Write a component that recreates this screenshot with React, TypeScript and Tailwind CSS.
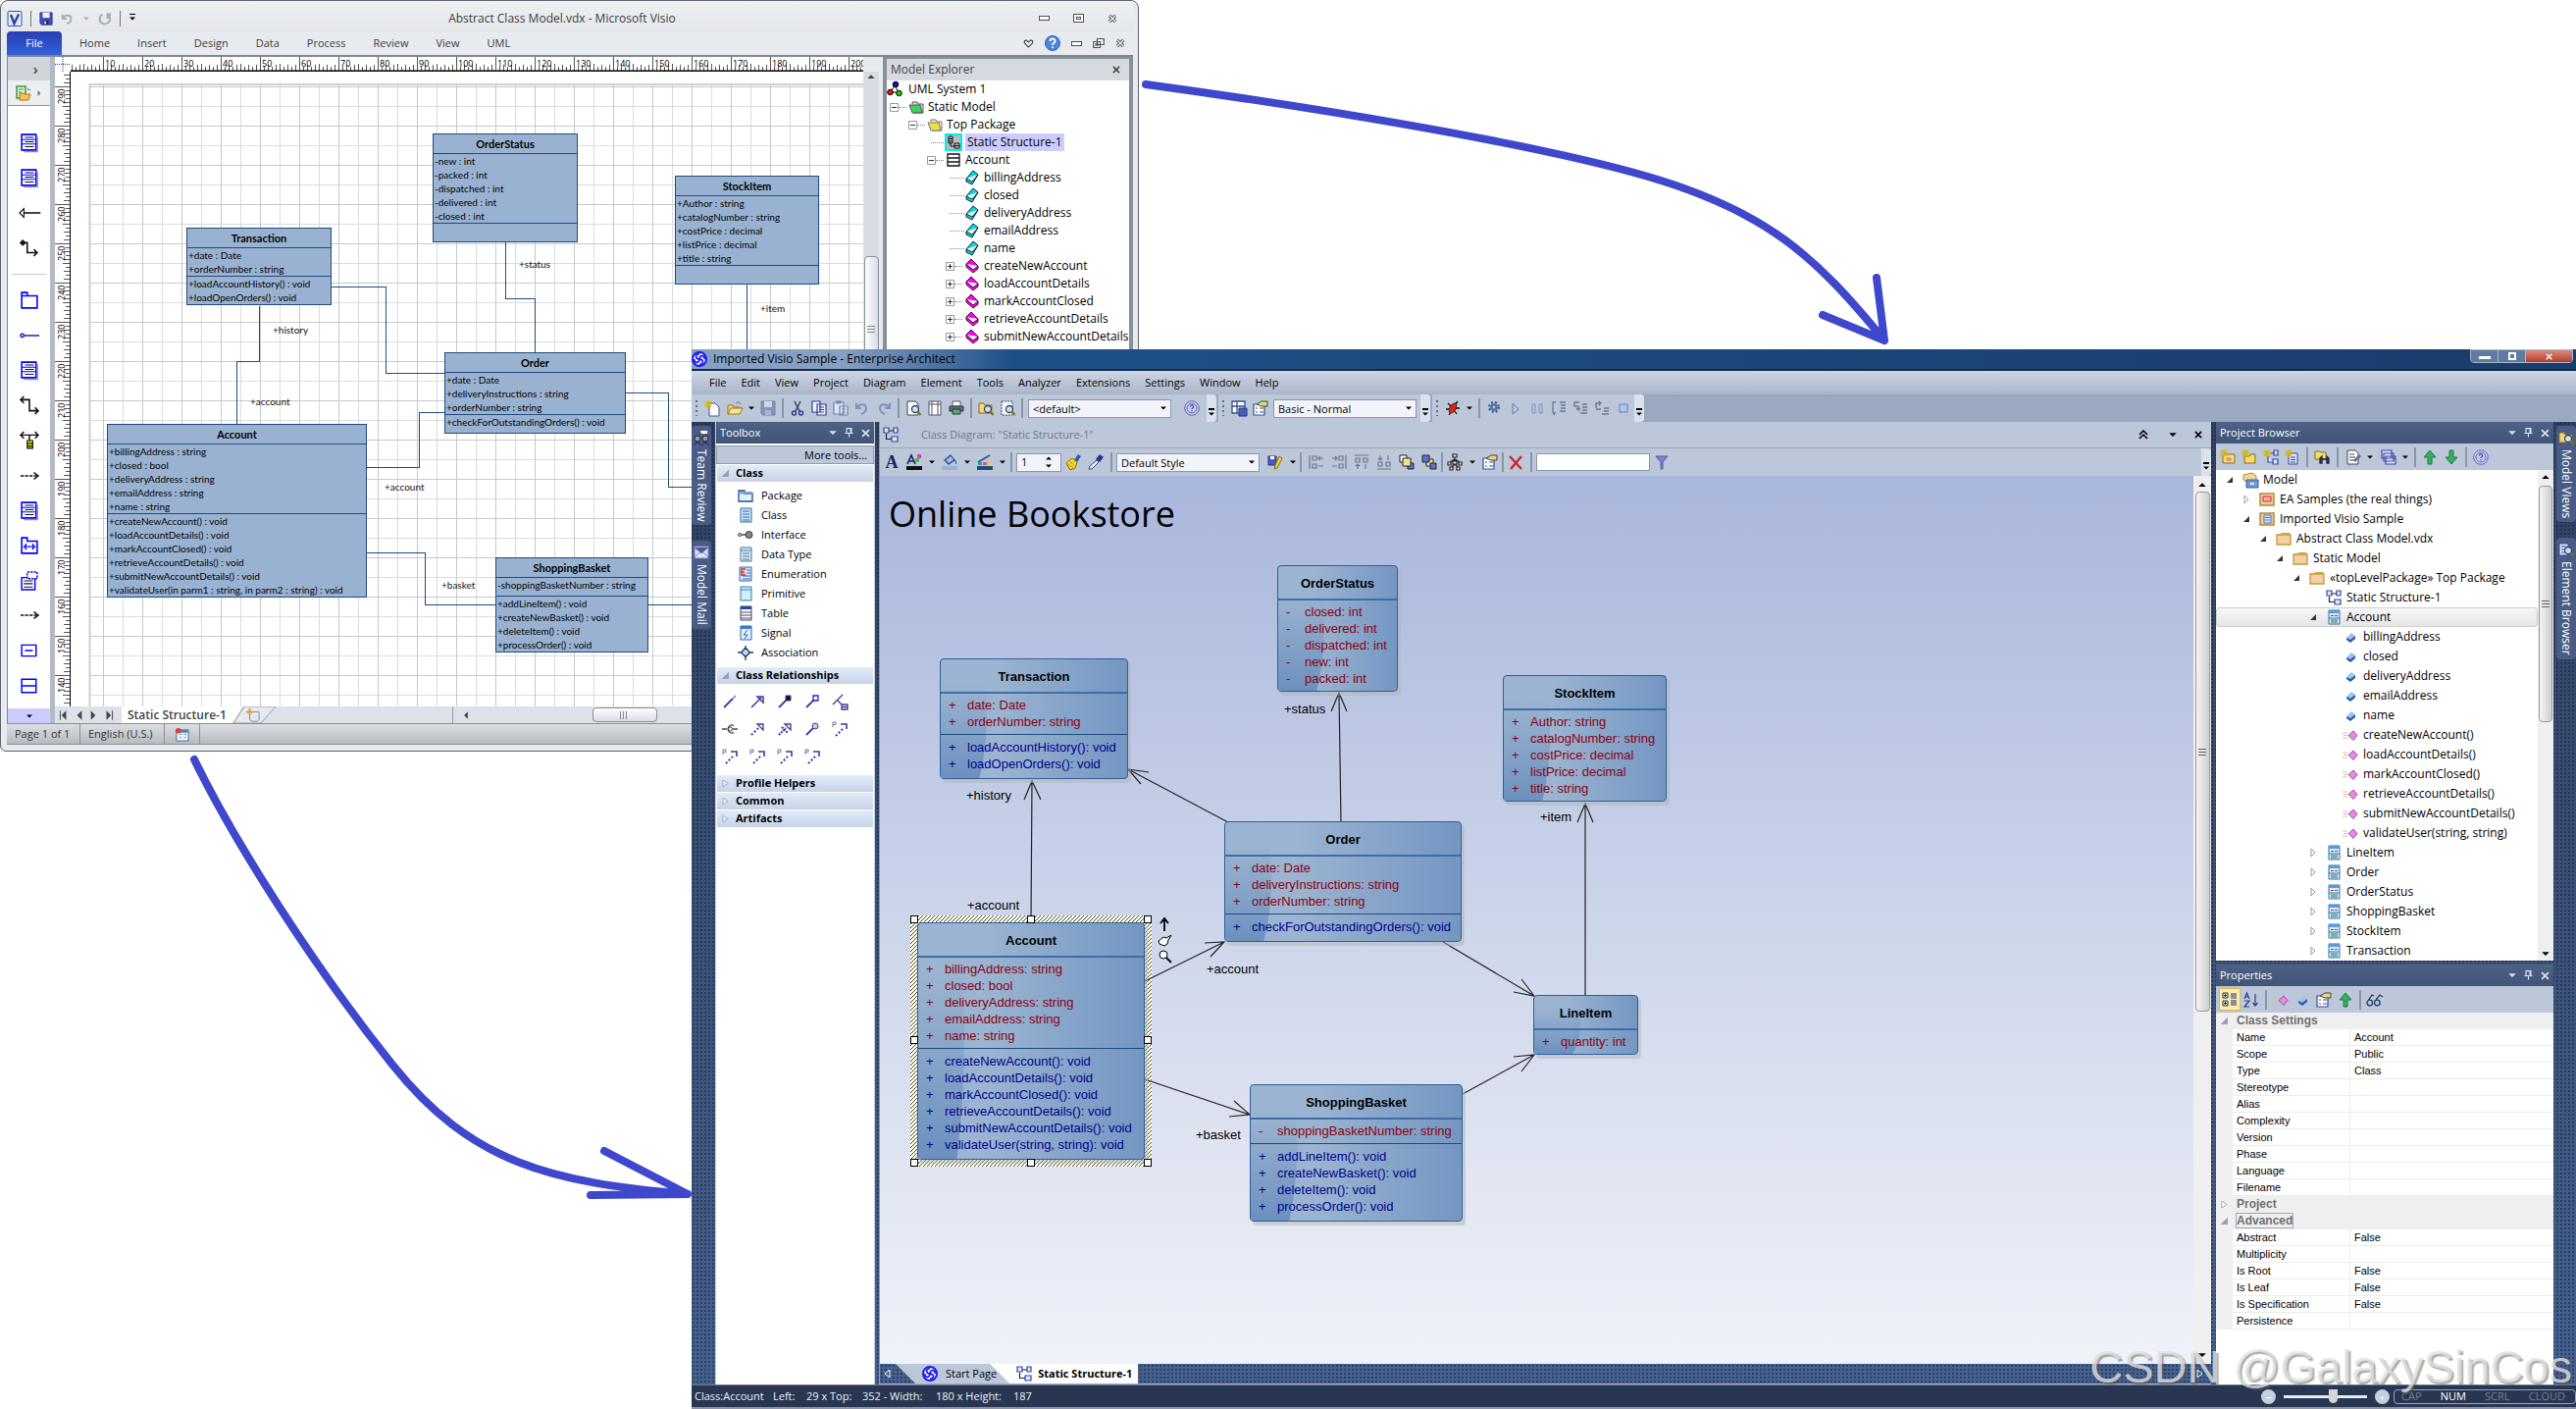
import type { ReactNode } from "react"

/* ---------- icons ---------- */

const star = <path d="M4 0v8M0 4h8M1 1l6 6M7 1 1 7" stroke="#d8b400" strokeWidth="1.2" />
const lens = (
  <>
    <circle cx="10" cy="9" r="3.5" fill="#cfe0f5" stroke="#33415c" strokeWidth="1.3" />
    <path d="m12.5 11.5 3 3.5" stroke="#8a6d1a" strokeWidth="2.2" />
  </>
)

const icons: Record<string, ReactNode> = {
  visio: (
    <>
      <rect x="1" y="0.5" width="14" height="15" rx="1" fill="#e6ecf8" stroke="#2f55a8" />
      <path d="M4 4l3.5 9L12 3.500" stroke="#2146a0" strokeWidth="2.4" />
    </>
  ),
  save: (
    <>
      <path d="M1 1h14v14H2.500L1 13.500z" fill="#3f4fc0" stroke="#2a3490" />
      <path d="M4 1h8v6H4z" fill="#f3f6ff" />
      <path d="M5 10h6v5H5z" fill="#20286a" />
      <path d="M6 11h2v3H6z" fill="#fff" />
    </>
  ),
  saveDim: (
    <>
      <path d="M1 1h14v14H2.500L1 13.500z" fill="#8593b8" stroke="#7482a8" />
      <path d="M4 1h8v6H4z" fill="#cdd5e6" />
      <path d="M5 10h6v5H5z" fill="#aab6d0" />
    </>
  ),
  undo: <path d="M2 3v5h5M2.500 7.500C5 3 12 3 12 8c0 3-2 5-5 6" stroke="currentColor" strokeWidth="2" />,
  redo: <path d="M14 3v5H9M13.500 7.500C11 3 4 3 4 8c0 3 2 5 5 6" stroke="currentColor" strokeWidth="2" />,
  repeat: <path d="M5 3a6 6 0 1 0 7 1M11 8V3h4" stroke="currentColor" strokeWidth="2.4" />,
  heart: <path d="M8 13 2 7V4l3-1 3 3 3-3 3 1v3z" stroke="currentColor" strokeWidth="1.800" fill="#fff" />,
  restore: <path d="M6 2h9v8H6zM1 6h9v8H1zM4 9h3v2H4z" stroke="currentColor" strokeWidth="1.500" fill="#f4f5f7" />,
  crossOutline: (
    <>
      <path d="M3 3l10 10M13 3 3 13" stroke="currentColor" strokeWidth="5" />
      <path d="M3 3l10 10M13 3 3 13" stroke="#fff" strokeWidth="2" />
    </>
  ),
  help: (
    <>
      <circle cx="8" cy="8" r="7.500" fill="#4b86d8" stroke="#2f62ad" />
      <path d="M5.500 6c0-3.500 5-3.500 5 0 0 2-2.500 1.800-2.500 4M8 11.500v1.500" stroke="#fff" strokeWidth="1.800" />
    </>
  ),
  helpRing: (
    <>
      <circle cx="8" cy="8" r="7.300" fill="#c9cff0" stroke="#6268b8" />
      <circle cx="8" cy="8" r="5" stroke="#6268b8" />
      <path d="M6.300 6.500c0-2.200 3.400-2.200 3.400 0 0 1.300-1.700 1.200-1.700 2.500M8 10.300v1.200" stroke="#4046a0" strokeWidth="1.200" />
    </>
  ),
  stencils: (
    <>
      <path d="M1 1h9v12H1z" fill="#dff0d8" stroke="#3c9a3c" strokeWidth="1.500" />
      <path d="M3 4h5M3 7h3" stroke="#3c9a3c" />
      <path d="M4 8h4l1 1h6l-2 6H4z" fill="#f7c64a" stroke="#a87412" />
      <path d="M12 3l2 2 1-1" stroke="#3564b0" />
    </>
  ),
  classBox: (
    <>
      <path d="M1 1h13v14H1z" fill="#fff" stroke="#00f" strokeWidth="1.400" />
      <path d="M4 3.500h8M4 7.500h8M4 12h8" stroke="#111" />
      <path d="M1 5.500h13M1 9.500h13" stroke="#00f" />
      <path d="M15.500 3v13.500H3" stroke="#999" />
    </>
  ),
  genArrow: (
    <>
      <path d="M18 8H3" stroke="#111" strokeWidth="1.400" />
      <path d="M3 4v8l-4-4z" stroke="#111" fill="#fff" />
    </>
  ),
  elbow: (
    <>
      <path d="M2 3h4v9h9M12 9l3 3-3 3" stroke="#111" strokeWidth="1.400" />
      <path d="M-1 3l3-3 3 3-3 3z" fill="#111" />
    </>
  ),
  elbow2: <path d="M0 3h8v10h8M13 10l3 3-3 3M3 0 0 3l3 3" stroke="#111" strokeWidth="1.400" />,
  folderOutline: <path d="M1 4V1h5v3h9v11H1zM1 4h5" stroke="#00f" strokeWidth="1.400" fill="#fff" />,
  lollipop: <path d="M3 8h14M3 8a1.500 1.500 0 1 0-3 0 1.500 1.500 0 0 0 3 0" stroke="#2020c0" strokeWidth="1.400" />,
  noteArrow: (
    <>
      <path d="M0 3h16M3 0 0 3l3 3M13 0l3 3-3 3M8 3v5" stroke="#111" strokeWidth="1.300" />
      <path d="M6 8h5v7H6z" fill="#ee0" stroke="#111" />
      <path d="M6 10.500h5M6 13h5" stroke="#111" />
    </>
  ),
  dashArrow: (
    <>
      <path d="M0 8h15" stroke="#111" strokeWidth="1.400" strokeDasharray="3 1" />
      <path d="M12 5l4 3-4 3" stroke="#111" strokeWidth="1.300" />
    </>
  ),
  subsystem: (
    <>
      <path d="M1 4V1h5v3h9v11H1z" fill="#fff" stroke="#00f" strokeWidth="1.400" />
      <path d="M3 9l2-2v4zM13 9l-2-2v4zM6 9h4" stroke="#00f" />
    </>
  ),
  dottedClass: (
    <>
      <path d="M1 5h12v11H1z" fill="#fff" stroke="#00f" strokeWidth="1.300" />
      <path d="M3 8h8M3 10.500h8M3 13.500h8" stroke="#111" />
      <path d="M6 0h9v6H6z" fill="#fff" stroke="#00f" strokeWidth="1.300" strokeDasharray="2 1" />
    </>
  ),
  object: <path d="M1 3h13v10H1zM4 8h7" stroke="#00f" strokeWidth="1.300" fill="#fff" />,
  node2: <path d="M1 2h13v12H1zM1 8h13" stroke="#00f" strokeWidth="1.300" fill="#fff" />,
  uml: (
    <>
      <path d="M8 4 4 11h8z" stroke="#111" />
      <circle cx="9" cy="3" r="2.800" fill="#11c" stroke="#000" />
      <circle cx="3.500" cy="11" r="2.800" fill="#e11" stroke="#000" />
      <circle cx="12.500" cy="12" r="2.800" fill="#1c1" stroke="#000" />
    </>
  ),
  folderGreen: (
    <>
      <path d="M4 5V3h5l1 2h5v9H5" fill="#cfe8cf" stroke="#555" />
      <path d="M1 6h11l2 8H4z" fill="#3fd060" stroke="#555" />
    </>
  ),
  folderYellow: (
    <>
      <path d="M4 5V3h5l1 2h5v9H5" fill="#f6f2c0" stroke="#777" />
      <path d="M1 6h11l2 8H4z" fill="#ece04a" stroke="#777" />
    </>
  ),
  structure: (
    <>
      <rect width="16" height="16" fill="#bbb" stroke="#0ee" strokeWidth="2" />
      <path d="M3 2h4v7H3zM3 4.500h4M3 7h4M9 9h5v5H9zM9 11.500h5M5 9v3h4" stroke="#111" />
    </>
  ),
  classBlack: <path d="M2 2h12v12H2zM2 6h12M2 10h12" stroke="#111" fill="#fff" strokeWidth="1.300" />,
  gemCyan: <path d="M2 9l7-8 5 4-6 10-6-3zM2 9l6 3 6-7" fill="#0dd" stroke="#123" />,
  gemMagenta: <path d="M2 6l5-5 7 7v3l-5 4-7-6zM2 6l7 6 5-4" fill="#f0e" stroke="#313" />,
  logo: (
    <>
      <circle cx="8" cy="8" r="7" fill="#fff" stroke="#1a1aee" strokeWidth="2" />
      <path d="M8 8C3 8 4 2 8 3M8 8c5 0 4 6 0 5M8 8c0 5-6 4-5 0M8 8c0-5 6-4 5 0" stroke="#1a1aee" strokeWidth="1.800" />
    </>
  ),
  newDoc: (
    <>
      <path d="M5 3h6l4 4v9H5z" fill="#f8fbff" stroke="#3e5c94" />
      {star}
    </>
  ),
  open: (
    <>
      <path d="M1 14V5h5l1 2h6v3" fill="#f5d77a" stroke="#9a7414" />
      <path d="M1 14l3-6h12l-3 6z" fill="#fbe49a" stroke="#9a7414" />
      <path d="M9 3c2-2 4-1 5 1" stroke="#666" />
    </>
  ),
  cut: (
    <>
      <path d="M5 1l5 10M11 1 6 11" stroke="#3a4664" strokeWidth="1.500" />
      <circle cx="4.500" cy="13" r="2" stroke="#33408f" strokeWidth="1.500" />
      <circle cx="11.500" cy="13" r="2" stroke="#33408f" strokeWidth="1.500" />
    </>
  ),
  copy: <path d="M1 1h8v11H1zM6 4h9v11H6zM8 7h5M8 9.500h5M8 12h5" fill="#f3f5fd" stroke="#33408f" strokeWidth="1.200" />,
  paste: <path d="M1 2h10v12H1zM4 1h4v2H4zM7 6h8v9H7zM9 9h4M9 12h4" fill="#dde4f2" stroke="#7384b0" strokeWidth="1.200" />,
  preview: (
    <>
      <path d="M2 1h8l3 3v11H2z" fill="#fff" stroke="#445" />
      {lens}
    </>
  ),
  page: <path d="M2 1h12v14H2zM5 1v14M11 1v14M2 4h12" fill="#fff" stroke="#556" />,
  print: (
    <>
      <path d="M4 1h8v5H4z" fill="#fff" stroke="#556" />
      <path d="M1 6h14v5H1z" fill="#5d6a84" stroke="#334" />
      <path d="M4 9h8v5H4z" fill="#4fb06a" stroke="#334" />
    </>
  ),
  findFolder: (
    <>
      <path d="M1 3h5l1 2h7v8H1z" fill="#f5d77a" stroke="#8a6d1a" />
      {lens}
    </>
  ),
  findDoc: (
    <>
      <path d="M2 1h11v14H2z" fill="#f5f7ff" stroke="#445" strokeDasharray="2 1" />
      {lens}
    </>
  ),
  layoutSave: (
    <>
      <path d="M1 1h13v12H1zM1 6h13M6 1v12" fill="#fff" stroke="#33508f" strokeWidth="1.300" />
      <path d="M8 8h8v8H8z" fill="#4a5cc0" stroke="#26307a" />
    </>
  ),
  props: (
    <>
      <path d="M1 4h11v11H1zM3 8h2M3 12h2M7 8h4M7 12h4" fill="#fff" stroke="#33508f" strokeWidth="1.200" />
      <path d="M4 4l5-3h6v5H9z" fill="#e6d87a" stroke="#444" />
    </>
  ),
  bug: (
    <>
      <path d="M3 3l3 3M13 1l-3 4M1 9h4M11 8h4M4 15l2-3M12 14l-2-3" stroke="#111" strokeWidth="1.300" />
      <ellipse cx="8" cy="8" rx="3" ry="5.500" transform="rotate(30 8 8)" fill="#d22" stroke="#611" />
    </>
  ),
  gear: (
    <>
      <circle cx="8" cy="7" r="5" stroke="#41588e" strokeWidth="2" strokeDasharray="2 2" />
      <circle cx="8" cy="7" r="4" fill="#5874ac" />
      <circle cx="8" cy="7" r="1.200" fill="#c7d3ea" />
    </>
  ),
  play: <path d="M5 3l6 6-6 5z" fill="#b6c5e6" stroke="#6679b0" />,
  pause: <path d="M3 4h3v9H3zM10 4h3v9h-3z" fill="#b6c5e6" stroke="#7f8fbe" />,
  step1: <path d="M5 2H2v11l2 2M9 2h6M10 5h5M10 8h5M9 11h6M5 12l-2 2" stroke="#6a7890" strokeWidth="1.300" />,
  step2: <path d="M7 2H2v4h4v4M4 8l2 2 2-2M10 4h5M10 7h5M10 10h5M8 13h7" stroke="#6a7890" strokeWidth="1.300" />,
  step3: <path d="M2 8V3h5M5 1l2 2-2 2M2 9h5M10 8h5M10 11h5M8 14h7" stroke="#6a7890" strokeWidth="1.300" />,
  stop: <path d="M4 4h8v8H4z" fill="#b6c5f0" stroke="#6679c0" />,
  diagram: (
    <>
      <path d="M6 4h5M3.500 7v5.500H9" stroke="#223" strokeWidth="1.200" />
      <path d="M1 1h5v5H1zM11 1h4v5h-4zM9 10h6v5H9z" fill="#dfe8ff" stroke="#34459c" strokeWidth="1.200" />
    </>
  ),
  fillBucket: (
    <>
      <path d="M3 6l6-5 4 5-6 4z" fill="#9db9e8" stroke="#26408a" strokeWidth="1.200" />
      <path d="M13 6c2 1 2 3 1 4" stroke="#26408a" />
      <path d="M0 12h16v4H0z" fill="#9ab3d3" />
    </>
  ),
  fontColor: (
    <>
      <path d="M11 0h4v4h-4z" fill="#e3c" />
      <path d="M9 4h4v4H9z" fill="#3c4" />
      <path d="M1 10 5 1l4 9M3 7h4" stroke="#14246a" strokeWidth="1.600" />
      <path d="M0 12h16v4H0z" fill="#111" />
    </>
  ),
  lineColor: (
    <>
      <path d="M1 8 13 1" stroke="#33508f" strokeWidth="1.500" />
      <path d="M1 8h4v3H1z" fill="#2a9" />
      <path d="M6 8h4v3H6z" fill="#e4b" />
      <path d="M11 8h4v3h-4z" fill="#dd3" />
      <path d="M0 12h16v4H0z" fill="#1f4b80" />
    </>
  ),
  brush: (
    <>
      <path d="M9 6l4-6 3 2-4 6z" fill="#2a5bb0" />
      <path d="M1 9 7 4l5 4-2 6-5 2z" fill="#f6d822" stroke="#8a6a10" />
      <path d="M3 10l5 4M5 8l4 3" stroke="#b89a10" />
    </>
  ),
  dropper: (
    <>
      <path d="M8 5l4-5 4 3-4 5z" fill="#26348f" />
      <path d="M9 6l2 2-7 7H1l1-3z" fill="#eef3ff" stroke="#33408f" />
    </>
  ),
  saveStyle: (
    <>
      <path d="M1 2h8v9H1z" fill="#4a5cc0" stroke="#26307a" />
      <path d="M3 2h4v3H3z" fill="#fff" />
      <path d="M12 2l3 2-5 10-3 1 1-4z" fill="#f3cf3a" stroke="#8a6a10" />
    </>
  ),
  alignL: <path d="M1 1v14M4 2h4v4H4zM4 10h4v4H4zM15 4h-5M12 2l-2 2 2 2M15 12h-5" stroke="#6a7890" strokeWidth="1.200" />,
  alignR: <path d="M15 1v14M8 2h4v4H8zM8 10h4v4H8zM1 4h5M4 2l2 2-2 2M1 12h5" stroke="#6a7890" strokeWidth="1.200" />,
  alignT: <path d="M1 1h14M2 4h4v4H2zM10 4h4v4h-4zM4 15v-5M2 12l2-2 2 2M12 15v-5" stroke="#6a7890" strokeWidth="1.200" />,
  alignB: <path d="M1 15h14M2 8h4v4H2zM10 8h4v4h-4zM4 1v5M2 4l2 2 2-2M12 1v5" stroke="#6a7890" strokeWidth="1.200" />,
  front: (
    <>
      <path d="M1 1h7v7H1z" fill="#fff" stroke="#223" />
      <path d="M9 9h6v6H9z" fill="#5c74c8" stroke="#223" />
      <path d="M4 4h8v8H4z" fill="#f8e38a" stroke="#223" />
    </>
  ),
  back: (
    <>
      <path d="M5 5h7v7H5z" fill="#f8e38a" stroke="#223" />
      <path d="M1 1h7v7H1zM9 9h6v6H9z" fill="#5c74c8" stroke="#223" />
    </>
  ),
  org: (
    <path d="M6 0h4v3H6zM8 3v4M3 8l5-3 5 3M1 8h3v3H1zM12 8h3v3h-3zM6 7h4v3H6zM8 10l-3 3M8 10l3 3M3 13h3v3H3zM10 13h3v3h-3z" fill="#e6ebf5" stroke="#222" strokeWidth="1.200" />
  ),
  remove: <path d="M2 2l12 13M14 2 3 15" stroke="#d02020" strokeWidth="2.200" />,
  funnel: <path d="M2 2h12L9 8v7H7V8z" fill="#7c86c8" stroke="#525ca8" />,
  newModel: (
    <>
      <path d="M3 5h12v9H3z" fill="#f6dc6a" stroke="#8a6d1a" />
      <ellipse cx="9" cy="10" rx="3" ry="2" fill="#c9a" />
      {star}
    </>
  ),
  newPackage: (
    <>
      <path d="M3 7h5l1-2h5v9H3z" fill="#f6dc6a" stroke="#8a6d1a" />
      {star}
    </>
  ),
  newDiagram: (
    <>
      <path d="M7 4h5M5 7v6h5M11 1h4v5h-4zM10 10h5v5h-5z" fill="#dfe8ff" stroke="#34459c" strokeWidth="1.200" />
      {star}
    </>
  ),
  newElement: (
    <>
      <path d="M4 4h9v11H4zM6 8h5M6 10.500h5M6 13h5" fill="#dfe8ff" stroke="#34459c" />
      {star}
    </>
  ),
  findTree: (
    <>
      <path d="M1 2h5l1 1h5v7H1z" fill="#f6dc6a" stroke="#8a6d1a" />
      <path d="M6 14V9l2-2v7zM15 14V9l-2-2v7zM8 10h5" fill="#445" stroke="#223" strokeWidth="1.300" />
    </>
  ),
  docEdit: (
    <>
      <path d="M2 1h8l3 3v11H2zM4 5h5M4 8h6M4 11h5" fill="#fff" stroke="#445" />
      <path d="M8 11l6-6 2 2-6 6z" fill="#6b7390" />
    </>
  ),
  windows: <path d="M1 1h10v8H1zM3 4h10v8H3zM5 7h10v8H5zM5 9h10" fill="#dfe4fb" stroke="#3c48a8" strokeWidth="1.200" />,
  up: <path d="M8 1l6 7h-4v7H6V8H2z" fill="#35b060" stroke="#1c7a3c" />,
  down: <path d="M8 15l6-7h-4V1H6v7H2z" fill="#35b060" stroke="#1c7a3c" />,
  model: (
    <>
      <path d="M1 3l9-2 4 3v7H5L1 8z" fill="#f3d79a" stroke="#b08a38" />
      <path d="M4 8h12v8H4z" fill="#6f9ad0" stroke="#33609c" />
      <path d="M8 11h4v2H8z" fill="#e8f0fb" />
    </>
  ),
  viewRed: (
    <>
      <path d="M1 2h14v12H1z" fill="#f3c8a0" stroke="#b5883a" strokeWidth="1.500" />
      <path d="M4 5h8v5H4z" fill="#f4b0b0" stroke="#c33" />
    </>
  ),
  viewBlue: (
    <>
      <path d="M1 2h14v12H1z" fill="#f3c8a0" stroke="#b5883a" strokeWidth="1.500" />
      <path d="M5 4h7v8H5zM6 6.500h5M6 9h5" fill="#dce8fb" stroke="#4a78b8" />
    </>
  ),
  pkg: (
    <>
      <path d="M1 4h4l1-1.500h8V4" fill="#fae7a0" stroke="#c9a038" />
      <path d="M1 4h14v10H1z" fill="#f3cfa6" stroke="#c39a3a" strokeWidth="1.300" />
    </>
  ),
  cls: (
    <>
      <path d="M3 1h11v14H3z" fill="#d6eefb" stroke="#2f6fb8" />
      <path d="M3 1h11v3H3z" fill="#5b9bd8" />
      <path d="M5 6.500h3M9 6.500h3" stroke="#c33" />
      <path d="M3 9h11" stroke="#2f6fb8" />
      <path d="M5 11h7M5 13h7" stroke="#274" />
    </>
  ),
  attr: (
    <>
      <path d="M4 9l5-5 4 3-5 6z" fill="#9cc4ee" />
      <path d="M4 9l4 2v3l-4-3zM8 11l5-4v3l-5 4z" fill="#2a5ca8" />
    </>
  ),
  op: (
    <>
      <path d="M0 6h5M1 8.500h4M0 11h5" stroke="#c9c79a" />
      <path d="M6 8.500 11 4l4 4.500-4 5z" fill="#e48ae0" stroke="#a04aa0" />
    </>
  ),
  categorized: <path d="M1 1h5v5H1zM1 9h5v5H1zM3.500 2v3M2 3.500h3M3.500 10v3M2 11.500h3M9 2h6M9 4h6M9 6h6M9 9h6M9 11h6M9 13h6" stroke="#16306a" />,
  sortAz: <path d="M1 7l2.500-6L6 7M2 5h3M1 9h5l-5 6h5M12 2v12M9.500 11l2.500 3 2.500-3" stroke="#26408a" strokeWidth="1.200" />,
  glasses: <path d="M0 11a2.800 2.800 0 1 0 5.600 0 2.800 2.800 0 0 0-5.600 0M7.500 11a2.800 2.800 0 1 0 5.600 0 2.800 2.800 0 0 0-5.600 0M1 9l4-6 2 1M9 8l4-5 3 2" stroke="#223a70" strokeWidth="1.300" />,
  packageBlue: (
    <>
      <path d="M1 3h6v3h8v8H1z" fill="#e3effc" stroke="#2c4a86" strokeWidth="1.300" />
      <path d="M1 4h14v2.500H1z" fill="#7fa4d6" />
    </>
  ),
  classBlue: <path d="M3 1h11v14H3zM5 4h7M5 7h7M5 10h7M5 13h7" fill="#cfe4f8" stroke="#2f64ac" />,
  interface: (
    <>
      <path d="M3 8h6" stroke="#333" strokeWidth="1.300" />
      <circle cx="2" cy="8" r="1.500" fill="#fff" stroke="#333" />
      <circle cx="11.500" cy="8" r="3.500" fill="#888" stroke="#333" />
    </>
  ),
  dataType: <path d="M3 1h11v14H3zM3 4h11M5 7h7M5 10h7M5 13h7" fill="#d9ecf5" stroke="#47749c" />,
  enumeration: (
    <>
      <path d="M2 1h12v14H2zM9 4h4M9 7h4M5 10h8M5 13h8" fill="#dfeaf8" stroke="#2f64ac" />
      <path d="M8 3H4v6h4M4 6h3" stroke="#c22" strokeWidth="1.300" />
    </>
  ),
  primitive: <path d="M3 1h11v14H3zM3 4h11" fill="#cfeef8" stroke="#3f78b8" />,
  tableIcon: (
    <>
      <path d="M3 1h11v14H3zM3 7h11M3 10h11M3 13h11" fill="#fff" stroke="#446" />
      <path d="M3 1h11v3H3z" fill="#1d4f9a" />
    </>
  ),
  signal: (
    <>
      <path d="M3 1h11v14H3z" fill="#e0effb" stroke="#2f64ac" />
      <path d="M3 1h11v3H3z" fill="#3f78c0" />
      <path d="M10 5l-4 5h4l-3 4" stroke="#2f64ac" />
    </>
  ),
  association: <path d="M0 8h4M12 8h4M8 12v4M8 1v2M8 3l4.500 5L8 12.500 3.500 8z" fill="#b8dcf0" stroke="#223a60" strokeWidth="1.300" />,
  relLine: (
    <>
      <path d="M2 14 11 5" stroke="#3c3c98" strokeWidth="1.800" />
      <path d="m11 5 3-3" stroke="#8ab" strokeWidth="1.800" />
    </>
  ),
  relArrow: <path d="M2 14 12 4M8 3h6v6z" stroke="#3c3c98" strokeWidth="1.500" />,
  relBlack: (
    <>
      <path d="M2 14 11 5" stroke="#3c3c98" strokeWidth="1.800" />
      <path d="M9 2h5v5H9z" fill="#112" stroke="#3c3c98" />
    </>
  ),
  relWhite: (
    <>
      <path d="M2 14 10 6" stroke="#3c3c98" strokeWidth="1.800" />
      <path d="M9 2h5v5H9z" fill="#fff" stroke="#22c" strokeWidth="1.300" />
    </>
  ),
  relClass: <path d="M1 11 11 1M6 7l4 4M10 11h6v5h-6zM10 13.500h6" stroke="#3c3c98" strokeWidth="1.300" />,
  relNode: (
    <>
      <path d="M0 8h5M11 8h5M12 4.500a4 4 0 1 0 0 7" stroke="#445" strokeWidth="1.300" />
      <circle cx="8.500" cy="8" r="2" stroke="#445" />
    </>
  ),
  relDash: (
    <>
      <path d="M2 14 9 7" stroke="#3c3c98" strokeWidth="2" strokeDasharray="2 2" />
      <path d="M8 3h6v6z" stroke="#3c3c98" strokeWidth="1.300" />
    </>
  ),
  relCross: (
    <>
      <path d="M2 14 9 7M5 6l6 6" stroke="#3c3c98" strokeWidth="2" strokeDasharray="2 1" />
      <path d="M8 3h6v6z" stroke="#3c3c98" strokeWidth="1.300" />
    </>
  ),
  relCircle: (
    <>
      <path d="M2 14 9 7" stroke="#3c3c98" strokeWidth="1.800" />
      <circle cx="11" cy="5" r="3" fill="#ccd" stroke="#3c3c98" />
    </>
  ),
  relTagged: (
    <>
      <path d="M4 15 11 8" stroke="#3c3c98" strokeWidth="2" strokeDasharray="2 2" />
      <path d="M9 3h6v5" stroke="#3c3c98" strokeWidth="1.600" />
      <path d="M1 1v5M1 1h3v2.500H1" stroke="#77a" />
    </>
  ),
  people: (
    <>
      <circle cx="4" cy="9" r="3" fill="#99a" stroke="#223" />
      <circle cx="12" cy="9" r="3" fill="#99a" stroke="#223" />
      <path d="M1 16c0-4 6-4 6 0M9 16c0-4 6-4 6 0" fill="#55a" stroke="#223" />
      <path d="M7 1h7v3H8z" fill="#fff" />
    </>
  ),
  mail: <path d="M1 2h14v12H1zM1 3l7 6 7-6M1 13l5-5M15 13l-5-5" fill="#e3e6fa" stroke="#7479c8" />,
  pageLens: (
    <>
      <path d="M1 2h9v12H1zM3 5h5M3 8h5M3 11h5" fill="#dfe8ff" stroke="#34459c" />
      {lens}
    </>
  ),
  newTab: (
    <>
      <path d="M4 4h11v9l-2 2H7l-3-2z" fill="#dfe9f5" stroke="#6a86ac" />
      <path d="M4 0v8M0 4h8" stroke="#e0912a" strokeWidth="2" />
    </>
  ),
  recordSheet: (
    <>
      <path d="M2 3h13v12H2z" fill="#eef4fc" stroke="#44699c" />
      <path d="M2 3h13v3H2zM5 8h3M10 8h3M5 11h3M10 11h3" fill="#4a78b8" stroke="#88a4c8" />
      <circle cx="4" cy="4" r="3" fill="#d8452a" />
    </>
  ),
  pin: <path d="M5 2h6v6H5zM3 8h10M8 8v5M10 2v6" stroke="currentColor" strokeWidth="1.400" />,
  close: <path d="M3 3l10 10M13 3 3 13" stroke="currentColor" strokeWidth="2.400" />,
  caret: <path d="M2 5h12l-6 6z" fill="currentColor" />,
}

function Icon({ name, className = "size-4" }: { name: string; className?: string }) {
  return (
    <svg viewBox="0 0 16 16" fill="none" className={`${className} shrink-0 overflow-visible`} aria-hidden="true">
      {icons[name]}
    </svg>
  )
}

function Tool({ name, className = "" }: { name: string; className?: string }) {
  return (
    <button aria-label={name} className={`flex h-5 w-[22px] shrink-0 items-center justify-center ${className}`}>
      <Icon name={name} />
    </button>
  )
}

function Caret() {
  return (
    <button aria-label="More options" className="flex h-5 w-3 shrink-0 items-center justify-center text-black">
      <Icon name="caret" className="size-2" />
    </button>
  )
}

function Sep({ className = "mx-[3px]" }: { className?: string }) {
  return <span className={`h-5 w-[2px] shrink-0 bg-[#8894aa] ${className}`} />
}

function Grip() {
  return <span className="mx-1 h-4 w-[2px] shrink-0 bg-[repeating-linear-gradient(#5d6c88_0_2px,transparent_2px_5px)]" />
}

function EndCap() {
  return (
    <span className="flex h-7 w-[10px] shrink-0 flex-col items-center justify-end rounded-r bg-[#dbe2ee] pb-1">
      <span className="h-[2px] w-[6px] bg-black" />
      <Icon name="caret" className="size-2" />
    </span>
  )
}

function Combo({ label, value, className }: { label: string; value: string; className: string }) {
  return (
    <div className={`relative h-[19px] shrink-0 border border-[#8a97ae] bg-[#f2f4f9] ${className}`}>
      <select aria-label={label} defaultValue={value} className="block h-[17px] w-full appearance-none bg-transparent pl-1 text-[11px] leading-[17px] outline-none">
        <option>{value}</option>
      </select>
      <span className="pointer-events-none absolute inset-y-0 right-[3px] flex items-center">
        <Icon name="caret" className="size-2" />
      </span>
    </div>
  )
}

/* ---------- Visio window ---------- */

interface VisioNode {
  name: string
  x: number
  y: number
  w: number
  attrs: string[]
  ops: string[]
}

const visioNodes: VisioNode[] = [
  { name: "OrderStatus", x: 369, y: 63, w: 148, attrs: ["-new : int", "-packed : int", "-dispatched : int", "-delivered : int", "-closed : int"], ops: [] },
  { name: "Transaction", x: 118, y: 159, w: 148, attrs: ["+date : Date", "+orderNumber : string"], ops: ["+loadAccountHistory() : void", "+loadOpenOrders() : void"] },
  { name: "StockItem", x: 616, y: 106, w: 147, attrs: ["+Author : string", "+catalogNumber : string", "+costPrice : decimal", "+listPrice : decimal", "+title : string"], ops: [] },
  { name: "Order", x: 381, y: 286, w: 185, attrs: ["+date : Date", "+deliveryInstructions : string", "+orderNumber : string"], ops: ["+checkForOutstandingOrders() : void"] },
  {
    name: "Account", x: 37, y: 359, w: 265,
    attrs: ["+billingAddress : string", "+closed : bool", "+deliveryAddress : string", "+emailAddress : string", "+name : string"],
    ops: ["+createNewAccount() : void", "+loadAccountDetails() : void", "+markAccountClosed() : void", "+retrieveAccountDetails() : void", "+submitNewAccountDetails() : void", "+validateUser(in parm1 : string, in parm2 : string) : void"],
  },
  { name: "ShoppingBasket", x: 433, y: 495, w: 156, attrs: ["-shoppingBasketNumber : string"], ops: ["+addLineItem() : void", "+createNewBasket() : void", "+deleteItem() : void", "+processOrder() : void"] },
]

const visioLines = [
  "266,219 321,219 321,307 381,307",
  "443,173 443,231 473,231 473,286",
  "192,239 192,295 169,295 169,359",
  "689,215 689,300",
  "565,327 609,327 609,423 650,423",
  "301,403 355,403 355,347 381,347",
  "301,490 361,490 361,543 433,543",
  "589,543 650,543",
]

const visioLabels = [
  { text: "+status", x: 457, y: 189 },
  { text: "+history", x: 206, y: 256 },
  { text: "+item", x: 703, y: 234 },
  { text: "+account", x: 183, y: 329 },
  { text: "+account", x: 320, y: 416 },
  { text: "+basket", x: 378, y: 516 },
]

const stencil = ["classBox", "classBox", "genArrow", "elbow"]
const stencilLower = ["folderOutline", "lollipop", "classBox", "elbow2", "noteArrow", "dashArrow", "classBox", "subsystem", "dottedClass", "dashArrow", "object", "node2"]

function TopRuler() {
  return (
    <svg className="h-[15px] w-full bg-white" aria-hidden="true">
      <defs>
        <pattern id="rt" width="40" height="15" patternUnits="userSpaceOnUse" x="33">
          <path d="M.5 0v15M20.5 7v8M4.5 10v5M8.500 8v7M12.500 10v5M16.500 8v7M24.500 10v5M28.500 8v7M32.500 10v5M36.500 8v7" stroke="#555" />
        </pattern>
      </defs>
      <rect width="100%" height="15" fill="url(#rt)" />
      {Array.from({ length: 20 }, (_, i) => (
        <text key={i} x={35 + i * 40} y="10" fontSize="9" fill="#000">{(i + 1) * 10}</text>
      ))}
      <path d="M0 14.500h900" stroke="#000" strokeWidth="2" />
    </svg>
  )
}

function SideRuler() {
  return (
    <svg className="h-full w-4 shrink-0 bg-white" aria-hidden="true">
      <defs>
        <pattern id="rl" width="16" height="40" patternUnits="userSpaceOnUse" y="15">
          <path d="M0 .5h16M8 20.500h8M11 4.500h5M9 8.500h7M11 12.500h5M9 16.500h7M11 24.500h5M9 28.500h7M11 32.500h5M9 36.500h7" stroke="#555" />
        </pattern>
      </defs>
      <rect width="16" height="100%" fill="url(#rl)" />
      {Array.from({ length: 16 }, (_, i) => (
        <text key={i} transform={`translate(10 ${33 + i * 40}) rotate(-90)`} fontSize="9" fill="#000">{290 - i * 10}</text>
      ))}
      <path d="M15.500 0v900" stroke="#000" />
    </svg>
  )
}

function VisioClass({ node }: { node: VisioNode }) {
  return (
    <div className="absolute border border-[#1f4b80] bg-[#9ab2d1] text-[10px] leading-[14px]" style={{ left: node.x, top: node.y, width: node.w }}>
      <div className="h-[19px] text-center text-[11px] leading-[20px] font-bold">{node.name}</div>
      {[node.attrs, node.ops].map((rows, i) => (
        <div key={i} className="min-h-[19px] border-t border-[#1f4b80] pl-px whitespace-nowrap">
          {rows.map((r) => (
            <div key={r}>{r}</div>
          ))}
        </div>
      ))}
    </div>
  )
}

function VisioCanvas() {
  return (
    <div className="relative min-w-0 flex-1 overflow-hidden bg-white font-['Lato','Open_Sans',sans-serif]">
      <svg className="absolute inset-0 h-full w-full" aria-hidden="true">
        <defs>
          <pattern id="grid" width="40" height="40" patternUnits="userSpaceOnUse" x="33" y="15">
            <path d="M20.500 0v40M0 20.500h40" stroke="#dcdcdc" />
            <path d="M.5 0v40M0 .5h40" stroke="#c8c8c8" />
          </pattern>
        </defs>
        <rect x="19" y="13" width="900" height="700" fill="url(#grid)" />
        <path d="M19.500 700V13h900" fill="none" stroke="#d0d0d0" strokeWidth="2" />
        {visioLines.map((p) => (
          <polyline key={p} points={p} fill="none" stroke="#1f4b80" shapeRendering="crispEdges" />
        ))}
      </svg>
      {visioNodes.map((n) => (
        <VisioClass key={n.name} node={n} />
      ))}
      {visioLabels.map((l) => (
        <span key={l.x} className="absolute text-[10px] leading-[14px] text-[#111]" style={{ left: l.x, top: l.y }}>
          {l.text}
        </span>
      ))}
    </div>
  )
}

const explorerAttrs = ["billingAddress", "closed", "deliveryAddress", "emailAddress", "name"]
const explorerOps = ["createNewAccount", "loadAccountDetails", "markAccountClosed", "retrieveAccountDetails", "submitNewAccountDetails"]

function ExplorerBox({ sign }: { sign?: string }) {
  if (!sign) return <span className="ml-1 w-[15px] shrink-0 border-t border-dotted border-[#7a8aa8]" />
  return (
    <span className="flex w-[19px] shrink-0 items-center">
      <svg viewBox="0 0 9 9" className="size-[9px]" aria-hidden="true">
        <path d="M.5.5h8v8h-8z" fill="#fff" stroke="#999" />
        <path d={sign === "+" ? "M2 4.500h5M4.500 2v5" : "M2 4.500h5"} stroke="#234" />
      </svg>
      <span className="w-2 border-t border-dotted border-[#7a8aa8]" />
    </span>
  )
}

function ModelExplorer() {
  return (
    <aside className="flex w-[255px] shrink-0 flex-col border-x-4 border-t-2 border-[#8a9099] bg-white">
      <div className="flex h-[22px] shrink-0 items-center justify-between bg-[#d5dae1] pr-2 pl-1 text-[12px] text-[#444]">
        <h2>Model Explorer</h2>
        <button aria-label="Close Model Explorer"><Icon name="close" className="size-[10px]" /></button>
      </div>
      <ul className="overflow-hidden text-[12px] leading-[18px] whitespace-nowrap">
        <li className="flex h-[18px] items-center gap-[6px]"><Icon name="uml" />UML System 1</li>
        <li className="flex h-[18px] items-center gap-1 pl-[3px]"><ExplorerBox sign="-" /><Icon name="folderGreen" className="-ml-1 size-4" />Static Model</li>
        <li className="flex h-[18px] items-center gap-1 pl-[22px]"><ExplorerBox sign="-" /><Icon name="folderYellow" className="-ml-1 size-4" />Top Package</li>
        <li className="flex h-[18px] items-center gap-1 pl-[41px]">
          <ExplorerBox />
          <Icon name="structure" className="-ml-1 size-4" />
          <span className="bg-[#ccccff] px-0.5">Static Structure-1</span>
        </li>
        <li className="flex h-[18px] items-center gap-1 pl-[41px]"><ExplorerBox sign="-" /><Icon name="classBlack" className="-ml-1 size-4" />Account</li>
        {explorerAttrs.map((a) => (
          <li key={a} className="flex h-[18px] items-center gap-1 pl-[60px]"><ExplorerBox /><Icon name="gemCyan" className="-ml-1 size-4" />{a}</li>
        ))}
        {explorerOps.map((o) => (
          <li key={o} className="flex h-[18px] items-center gap-1 pl-[60px]"><ExplorerBox sign="+" /><Icon name="gemMagenta" className="-ml-1 size-4" />{o}</li>
        ))}
      </ul>
    </aside>
  )
}

function VisioWindow() {
  return (
    <section className="absolute top-0 left-0 flex h-[766px] w-[1161px] flex-col rounded-t-lg rounded-b-md border border-[#5c6472] bg-[#e7eaee] pr-[5px] pl-[6px]">
      <header className="flex h-[31px] shrink-0 items-center bg-linear-to-b from-[#eef0f2] to-[#e4e7ea] pt-1">
        <div className="flex flex-1 items-center gap-2 text-[#a8abb0]">
          <Icon name="visio" />
          <span className="h-4 w-px bg-[#777]" />
          <Icon name="save" className="size-[14px]" />
          <Icon name="undo" className="size-[14px]" />
          <Icon name="caret" className="size-2" />
          <Icon name="repeat" className="size-[14px]" />
          <span className="h-4 w-px bg-[#777]" />
          <span className="flex flex-col items-center text-black">
            <span className="h-px w-[6px] bg-black" />
            <Icon name="caret" className="size-2" />
          </span>
        </div>
        <h1 className="text-[12px] text-[#3c3c3c]">Abstract Class Model.vdx - Microsoft Visio</h1>
        <div className="flex flex-1 items-center justify-end gap-6 pr-4 text-[#4a4f58]">
          <button aria-label="Minimize" className="h-[5px] w-[11px] border border-current bg-white" />
          <button aria-label="Maximize" className="flex h-[9px] w-[11px] items-center justify-center border border-current bg-white"><span className="h-[3px] w-[5px] border border-current" /></button>
          <button aria-label="Close"><Icon name="crossOutline" className="size-[10px]" /></button>
        </div>
      </header>
      <nav className="flex h-[24px] shrink-0 items-center gap-7 text-[11px] text-[#3c3c3c]">
        <button className="-mr-[10px] h-full w-[56px] rounded-t bg-linear-to-b from-[#2b3fb5] via-[#2c4fc4] to-[#3560dc] text-white">File</button>
        {["Home", "Insert", "Design", "Data", "Process", "Review", "View", "UML"].map((t) => (
          <button key={t}>{t}</button>
        ))}
        <div className="flex flex-1 items-center justify-end gap-[11px] pr-2 text-[#4a4f58]">
          <Icon name="heart" className="size-[11px]" />
          <Icon name="help" />
          <button aria-label="Minimize document" className="h-[5px] w-[11px] border border-current bg-white" />
          <button aria-label="Restore document"><Icon name="restore" className="size-3" /></button>
          <button aria-label="Close document"><Icon name="crossOutline" className="size-[10px]" /></button>
        </div>
      </nav>
      <div className="flex min-h-0 flex-1 border-t-2 border-[#80868f]">
        <div className="flex w-[44px] shrink-0 flex-col items-center border-l border-[#80868f] bg-white">
          <div className="flex h-6 w-full items-center justify-end bg-[#d0d5dc] pr-3 text-[14px] font-bold text-[#555]">›</div>
          <div className="flex h-[26px] w-full items-center justify-center gap-1 border-b border-[#999] bg-[#eceff2] text-[#777]">
            <Icon name="stencils" />
            <Icon name="caret" className="size-2 -rotate-90" />
          </div>
          <div className="mt-[28px] flex flex-col gap-[18px]">
            {stencil.map((s, i) => (
              <Icon key={i} name={s} className="size-[18px]" />
            ))}
          </div>
          <span className="my-[17px] h-px w-[36px] bg-[#ccc]" />
          <div className="flex flex-1 flex-col justify-between pb-[14px]">
            {stencilLower.map((s, i) => (
              <Icon key={i} name={s} className="size-[18px]" />
            ))}
          </div>
          <button aria-label="Scroll shapes" className="flex h-[15px] w-full items-center justify-center bg-[#ccccff]"><Icon name="caret" className="size-2" /></button>
        </div>
        <div className="w-[5px] shrink-0 bg-[#b4bac4]" />
        <div className="flex min-w-0 flex-1 flex-col">
          <div className="flex h-[15px] shrink-0 pr-4">
            <svg viewBox="0 0 16 15" className="h-[15px] w-4 shrink-0 bg-white" aria-hidden="true"><path d="M8 0v15M0 7.500h16" stroke="#22c" strokeDasharray="1 1" /></svg>
            <TopRuler />
          </div>
          <div className="flex min-h-0 flex-1">
            <SideRuler />
            <VisioCanvas />
            <div className="flex w-4 shrink-0 flex-col items-center bg-[#d9dde3] text-[#444]">
              <Icon name="caret" className="size-[10px] rotate-180" />
              <div className="mt-[178px] flex h-[150px] w-[15px] items-center justify-center rounded-sm border border-[#8a9099] bg-linear-to-r from-white to-[#d8dce3]">
                <span className="h-[9px] w-2 bg-[repeating-linear-gradient(#888_0_1px,transparent_1px_3px)]" />
              </div>
            </div>
          </div>
          <div className="flex h-[17px] shrink-0 items-center bg-[#dde1e8] text-[12px] text-[#444]">
            <div className="flex w-[68px] items-center justify-between pr-2 pl-1">
              <svg viewBox="0 0 60 10" className="h-[10px] w-[58px]" aria-hidden="true"><path d="M1 0h1v10H1zM8 0v10L3 5zM25 0v10l-5-5zM35 0v10l5-5zM52 0v10l5-5zM58 0h1v10h-1z" fill="#444" /></svg>
            </div>
            <a href="#static-structure" className="h-full bg-white px-[6px] leading-[17px] font-semibold">Static Structure-1</a>
            <svg viewBox="0 0 50 17" className="h-[17px] w-[50px]" aria-hidden="true">
              <path d="M0 0h10L0 17z" fill="#fff" />
              <path d="M12 0 1 17h28L44 0z" fill="#e6eaf0" stroke="#999" />
            </svg>
            <span className="-ml-[36px]"><Icon name="newTab" className="size-[14px]" /></span>
            <div className="ml-[196px] flex h-full items-center gap-2 border-l border-[#999] pl-2">
              <Icon name="caret" className="size-[10px] rotate-90" />
              <span className="ml-[116px] flex h-[15px] w-[66px] items-center justify-center rounded-sm border border-[#8a9099] bg-linear-to-b from-white to-[#d8dce3]">
                <span className="h-2 w-[9px] bg-[repeating-linear-gradient(90deg,#888_0_1px,transparent_1px_3px)]" />
              </span>
            </div>
          </div>
        </div>
        <div className="w-1 shrink-0 bg-[#e7eaee]" />
        <ModelExplorer />
      </div>
      <footer className="mb-[6px] flex h-[22px] shrink-0 items-center border-y border-[#8a9099] bg-linear-to-b from-[#dcdfe2] to-[#b6babf] text-[11px] text-[#333]">
        <span className="w-[75px] border-r border-[#8a9099] pl-2 leading-[20px]">Page 1 of 1</span>
        <span className="w-[86px] border-r border-[#8a9099] pl-2 leading-[20px]">English (U.S.)</span>
        <span className="flex h-[20px] w-[36px] items-center justify-center border-r border-[#8a9099]"><Icon name="recordSheet" className="size-[15px]" /></span>
      </footer>
    </section>
  )
}

/* ---------- Enterprise Architect window ---------- */

interface EaNode {
  name: string
  x: number
  y: number
  w: number
  attrs: [string, string][]
  ops: string[]
}

const eaNodes: EaNode[] = [
  { name: "Transaction", x: 61, y: 186, w: 192, attrs: [["+", "date: Date"], ["+", "orderNumber: string"]], ops: ["loadAccountHistory(): void", "loadOpenOrders(): void"] },
  { name: "OrderStatus", x: 405, y: 91, w: 123, attrs: [["-", "closed: int"], ["-", "delivered: int"], ["-", "dispatched: int"], ["-", "new: int"], ["-", "packed: int"]], ops: [] },
  { name: "StockItem", x: 635, y: 203, w: 167, attrs: [["+", "Author: string"], ["+", "catalogNumber: string"], ["+", "costPrice: decimal"], ["+", "listPrice: decimal"], ["+", "title: string"]], ops: [] },
  { name: "Order", x: 351, y: 352, w: 242, attrs: [["+", "date: Date"], ["+", "deliveryInstructions: string"], ["+", "orderNumber: string"]], ops: ["checkForOutstandingOrders(): void"] },
  {
    name: "Account", x: 38, y: 455, w: 232,
    attrs: [["+", "billingAddress: string"], ["+", "closed: bool"], ["+", "deliveryAddress: string"], ["+", "emailAddress: string"], ["+", "name: string"]],
    ops: ["createNewAccount(): void", "loadAccountDetails(): void", "markAccountClosed(): void", "retrieveAccountDetails(): void", "submitNewAccountDetails(): void", "validateUser(string, string): void"],
  },
  { name: "LineItem", x: 666, y: 529, w: 107, attrs: [["+", "quantity: int"]], ops: [] },
  { name: "ShoppingBasket", x: 377, y: 620, w: 217, attrs: [["-", "shoppingBasketNumber: string"]], ops: ["addLineItem(): void", "createNewBasket(): void", "deleteItem(): void", "processOrder(): void"] },
]

const eaLinks = [
  "M355 353 253 299M274 302 253 299 266 314",
  "M154 455 155 311M147 330 155 311 164 330",
  "M470 353 468 221M460 240 468 221 476 240",
  "M719 530V334M711 353 719 334 727 353",
  "M270 515 351 475M331 476 351 475 337 490",
  "M270 615 377 651M361 637 377 651 356 653",
  "M574 475 667 530M646 526 667 530 654 513",
  "M594 630 667 590M646 592 667 590 654 607",
]

const eaLabels = [
  { text: "+history", x: 88, y: 318 },
  { text: "+account", x: 89, y: 430 },
  { text: "+account", x: 333, y: 495 },
  { text: "+basket", x: 322, y: 664 },
  { text: "+status", x: 412, y: 230 },
  { text: "+item", x: 673, y: 340 },
]

function EaClass({ node }: { node: EaNode }) {
  return (
    <div
      className="absolute rounded border border-[#2f5f9b] bg-linear-to-r from-[#9bb4d1] from-30% to-[#7396c2] text-[13px] leading-[17px] shadow-[3px_4px_0_rgba(180,180,180,0.5)]"
      style={{ left: node.x, top: node.y, width: node.w }}
    >
      <svg viewBox="0 0 50 100" preserveAspectRatio="none" className="absolute inset-0 h-full w-[48px]" aria-hidden="true">
        <defs>
          <linearGradient id={`sheen-${node.name}`} x1="0" y1="0" x2="0" y2="1">
            <stop offset="0.1" stopColor="#7294c0" stopOpacity="0" />
            <stop offset="1" stopColor="#6b90bf" />
          </linearGradient>
        </defs>
        <path d="M0 10h46q8 50-5 90H0z" fill={`url(#sheen-${node.name})`} />
      </svg>
      <div className="relative h-[33px] text-center leading-[36px] font-bold">{node.name}</div>
      <div className="relative border-t-2 border-[#3f6da6] px-2 pt-[3px] pb-1 text-[#8b0010]">
        {node.attrs.map(([sign, text]) => (
          <div key={text} className="flex whitespace-nowrap"><span className="w-[19px]">{sign}</span>{text}</div>
        ))}
      </div>
      {node.ops.length > 0 && (
        <div className="relative border-t border-[#1f4b80] px-2 pt-1 pb-[6px] text-[#00008b]">
          {node.ops.map((o) => (
            <div key={o} className="flex whitespace-nowrap"><span className="w-[19px]">+</span>{o}</div>
          ))}
        </div>
      )}
    </div>
  )
}

const handles = [[31, 448], [150, 448], [269, 448], [31, 571], [269, 571], [31, 696], [150, 696], [269, 696]]

function EaCanvas() {
  return (
    <div className="relative min-w-0 flex-1 overflow-hidden bg-linear-to-b from-[#a9b6dc] via-[#cdd5ea] via-50% to-[#f0f2f9] font-['Liberation_Sans',Arial,sans-serif]">
      <h2 className="absolute top-[11px] left-[9px] font-['Open_Sans',sans-serif] text-[36px] leading-[56px]">Online Bookstore</h2>
      <svg className="absolute inset-0 h-full w-full" aria-hidden="true">
        <defs>
          <pattern id="hatch" width="4" height="4" patternUnits="userSpaceOnUse">
            <rect width="4" height="4" fill="#fffff0" />
            <path d="M0 4 4 0M-1 1l2-2M3 5l2-2" stroke="#4a4630" />
          </pattern>
        </defs>
        <rect x="31" y="448" width="246" height="256" fill="url(#hatch)" />
        {eaLinks.map((d) => (
          <path key={d} d={d} fill="none" stroke="#222" strokeWidth="1.200" />
        ))}
        <g stroke="#000" fill="none">
          <path d="M290 464v-12M286 456l4-5 4 5" strokeWidth="1.800" />
          <path d="m284 474 5-4 3 1 5-3-3 5-1 4-3 2-5-2z" fill="#fff" />
          <circle cx="289" cy="488" r="4" fill="#fff" />
          <path d="m292 491 5 5" strokeWidth="1.800" />
        </g>
      </svg>
      {eaNodes.map((n) => (
        <EaClass key={n.name} node={n} />
      ))}
      <svg className="absolute inset-0 h-full w-full" aria-hidden="true">
        {handles.map(([x, y]) => (
          <rect key={`${x}-${y}`} x={x + 0.5} y={y + 0.5} width="7" height="7" fill="#fff" stroke="#000" />
        ))}
      </svg>
      {eaLabels.map((l) => (
        <span key={`${l.text}${l.x}`} className="absolute text-[13px] leading-4" style={{ left: l.x, top: l.y }}>{l.text}</span>
      ))}
    </div>
  )
}

const toolboxItems = [
  ["packageBlue", "Package"],
  ["classBlue", "Class"],
  ["interface", "Interface"],
  ["dataType", "Data Type"],
  ["enumeration", "Enumeration"],
  ["primitive", "Primitive"],
  ["tableIcon", "Table"],
  ["signal", "Signal"],
  ["association", "Association"],
]

const relationships = ["relLine", "relArrow", "relBlack", "relWhite", "relClass", "relNode", "relDash", "relCross", "relCircle", "relTagged", "relTagged", "relTagged", "relTagged", "relTagged"]

function PanelHeader({ title }: { title: string }) {
  return (
    <div className="flex h-[22px] shrink-0 items-center bg-linear-to-b from-[#4f6184] to-[#405479] pr-[3px] pl-1 text-[11px] text-white">
      <h2 className="flex-1">{title}</h2>
      <div className="flex gap-[5px] text-[#dfe3ec]">
        <button aria-label={`${title} menu`}><Icon name="caret" className="size-[10px]" /></button>
        <button aria-label={`Pin ${title}`}><Icon name="pin" className="size-[13px]" /></button>
        <button aria-label={`Close ${title}`}><Icon name="close" className="size-[11px]" /></button>
      </div>
    </div>
  )
}

function ToolboxGroup({ title, open }: { title: string; open?: boolean }) {
  return (
    <button className="mx-px mb-px flex h-[17px] items-center bg-linear-to-b from-[#e2ecf9] to-[#c6d3e6] pl-[5px] text-[11px] font-bold">
      <svg viewBox="0 0 8 8" className="mr-[7px] size-[7px]" aria-hidden="true">
        <path d={open ? "M8 0v8H0z" : "M1 0l6 4-6 4z"} fill={open ? "#93a3bd" : "#eef3fa"} stroke="#93a3bd" />
      </svg>
      {title}
    </button>
  )
}

function Toolbox() {
  return (
    <aside className="flex w-[163px] shrink-0 flex-col border-x border-[#c3cbd9] bg-white">
      <PanelHeader title="Toolbox" />
      <button className="mt-[2px] mb-px h-[19px] border border-[#8e9aae] bg-[#bcc7d9] pr-[6px] text-right text-[11px] leading-[17px]">More tools...</button>
      <ToolboxGroup title="Class" open />
      <ul className="mb-[5px] pt-[3px]">
        {toolboxItems.map(([icon, label]) => (
          <li key={label} className="flex h-5 items-center gap-2 pl-[22px] text-[11px]"><Icon name={icon} />{label}</li>
        ))}
      </ul>
      <ToolboxGroup title="Class Relationships" open />
      <ul className="mt-[3px] mb-[5px] grid grid-cols-[repeat(5,28px)]">
        {relationships.map((r, i) => (
          <li key={i} className="flex h-7 items-center justify-center"><Icon name={r} /></li>
        ))}
      </ul>
      <ToolboxGroup title="Profile Helpers" />
      <ToolboxGroup title="Common" />
      <ToolboxGroup title="Artifacts" />
    </aside>
  )
}

function SideTab({ icon, label }: { icon: string; label: string }) {
  return (
    <button className="flex w-5 flex-col items-center gap-1 rounded bg-[#4a5c85] py-1 text-[12px] leading-4 text-white">
      <Icon name={icon} />
      <span className="[writing-mode:vertical-rl]">{label}</span>
    </button>
  )
}

interface TreeRow {
  depth: number
  icon: string
  label: string
  state?: "open" | "closed"
}

const treeRows: TreeRow[] = [
  { depth: 0, icon: "model", label: "Model", state: "open" },
  { depth: 1, icon: "viewRed", label: "EA Samples (the real things)", state: "closed" },
  { depth: 1, icon: "viewBlue", label: "Imported Visio Sample", state: "open" },
  { depth: 2, icon: "pkg", label: "Abstract Class Model.vdx", state: "open" },
  { depth: 3, icon: "pkg", label: "Static Model", state: "open" },
  { depth: 4, icon: "pkg", label: "«topLevelPackage» Top Package", state: "open" },
  { depth: 5, icon: "diagram", label: "Static Structure-1" },
  { depth: 5, icon: "cls", label: "Account", state: "open" },
  ...["billingAddress", "closed", "deliveryAddress", "emailAddress", "name"].map((label) => ({ depth: 6, icon: "attr", label })),
  ...["createNewAccount()", "loadAccountDetails()", "markAccountClosed()", "retrieveAccountDetails()", "submitNewAccountDetails()", "validateUser(string, string)"].map((label) => ({ depth: 6, icon: "op", label })),
  ...["LineItem", "Order", "OrderStatus", "ShoppingBasket", "StockItem", "Transaction"].map((label) => ({ depth: 5, icon: "cls", label, state: "closed" as const })),
]

function ProjectBrowser() {
  return (
    <section className="flex shrink-0 flex-col">
      <PanelHeader title="Project Browser" />
      <div className="flex h-[27px] shrink-0 items-center bg-[#bcc7d9] pl-px">
        {["newModel", "newPackage", "newDiagram", "newElement"].map((t) => <Tool key={t} name={t} />)}
        <Sep />
        <Tool name="findTree" />
        <Sep className="mx-1" />
        <Tool name="docEdit" /><Caret />
        <Tool name="windows" className="ml-0.5" /><Caret />
        <Sep />
        <Tool name="up" /><Tool name="down" />
        <Sep />
        <Tool name="helpRing" />
      </div>
      <div className="flex bg-white">
        <ul className="flex-1 text-[12px]">
          {treeRows.map((r) => (
            <li
              key={r.label}
              className={`flex h-5 items-center ${r.label === "Account" ? "rounded bg-linear-to-b from-[#f8f8f8] to-[#e4e4e4] ring-1 ring-[#d0d0d0] ring-inset" : ""}`}
              style={{ paddingLeft: 10 + r.depth * 17 }}
            >
              <svg viewBox="0 0 8 8" className="mr-[9px] size-2 overflow-visible" aria-hidden="true">
                {r.state === "open" && <path d="M7 1v6H1z" fill="#333" />}
                {r.state === "closed" && <path d="M2 0l4 4-4 4z" fill="#fff" stroke="#999" />}
              </svg>
              <Icon name={r.icon} className="mr-[5px] size-4" />
              {r.label}
            </li>
          ))}
        </ul>
        <div className="flex w-4 flex-col items-center bg-[#efefef] py-0.5">
          <Icon name="caret" className="size-[10px] rotate-180" />
          <div className="mt-1 flex h-[241px] w-[14px] items-center justify-center rounded-sm border border-[#999] bg-linear-to-r from-[#f4f4f4] to-[#cfcfcf]">
            <span className="h-[7px] w-2 bg-[repeating-linear-gradient(#666_0_1px,transparent_1px_3px)]" />
          </div>
          <div className="flex-1" />
          <Icon name="caret" className="size-[10px]" />
        </div>
      </div>
    </section>
  )
}

const classSettings = [["Name", "Account"], ["Scope", "Public"], ["Type", "Class"], ["Stereotype", ""], ["Alias", ""], ["Complexity", ""], ["Version", ""], ["Phase", ""], ["Language", ""], ["Filename", ""]]
const advanced = [["Abstract", "False"], ["Multiplicity", ""], ["Is Root", "False"], ["Is Leaf", "False"], ["Is Specification", "False"], ["Persistence", ""]]

function GroupRow({ title, open, focused }: { title: string; open?: boolean; focused?: boolean }) {
  return (
    <tr className="h-[17px] bg-[#efefef]">
      <td className="text-center">
        <svg viewBox="0 0 8 8" className="mx-auto size-[7px]" aria-hidden="true">
          <path d={open ? "M8 0v8H0z" : "M1 0l6 4-6 4z"} fill={open ? "#93a3bd" : "#fff"} stroke="#93a3bd" />
        </svg>
      </td>
      <th colSpan={2} className="p-0 pl-1 text-left text-[12px] leading-[15px] font-bold text-[#707070]">
        <span className={focused ? "outline outline-[#9aa9c4]" : ""}>{title}</span>
      </th>
    </tr>
  )
}

function PropertyRows({ rows }: { rows: string[][] }) {
  return rows.map(([k, v]) => (
    <tr key={k} className="h-[17px]">
      <td className="bg-[#efefef]" />
      <th className="border-b border-[#ececec] p-0 pl-1 text-left font-normal">{k}</th>
      <td className="border-b border-l border-[#ececec] p-0 pl-1">{v}</td>
    </tr>
  ))
}

function Properties() {
  return (
    <section className="mt-1 flex min-h-0 flex-1 flex-col">
      <PanelHeader title="Properties" />
      <div className="flex h-[27px] shrink-0 items-center bg-[#bcc7d9] pl-[3px]">
        <Tool name="categorized" className="h-[23px] border border-[#e0b84a] bg-[#fdeeb0]" />
        <Tool name="sortAz" />
        <Sep />
        <Tool name="op" /><Tool name="attr" /><Tool name="props" /><Tool name="up" />
        <Sep />
        <Tool name="glasses" />
      </div>
      <div className="flex-1 bg-white">
        <table className="w-full table-fixed border-separate border-spacing-0 font-['Liberation_Sans',Arial,sans-serif] text-[11px] leading-4">
          <colgroup>
            <col className="w-[17px]" />
            <col className="w-[119px]" />
            <col />
          </colgroup>
          <tbody>
            <GroupRow title="Class Settings" open />
            <PropertyRows rows={classSettings} />
            <GroupRow title="Project" />
            <GroupRow title="Advanced" open focused />
            <PropertyRows rows={advanced} />
          </tbody>
        </table>
      </div>
    </section>
  )
}

function DiagramToolbar() {
  return (
    <div className="flex h-7 shrink-0 items-center gap-px bg-[#bcc7d9] pl-px">
      <button aria-label="Font" className="w-[22px] text-center font-['Liberation_Serif',serif] text-[18px] leading-none font-bold text-[#14246a]">A</button>
      <Tool name="fontColor" /><Caret /><Tool name="fillBucket" /><Caret /><Tool name="lineColor" /><Caret />
      <Sep className="mr-[3px] ml-px" />
      <div className="flex h-[19px] w-[46px] shrink-0 items-center border border-[#8a97ae] bg-[#f2f4f9]">
        <input aria-label="Line width" defaultValue="1" className="w-7 pl-1 text-[11px] outline-none" />
        <span className="flex flex-col">
          <Icon name="caret" className="size-2 rotate-180" />
          <Icon name="caret" className="size-2" />
        </span>
      </div>
      <Tool name="brush" /><Tool name="dropper" />
      <Sep />
      <Combo label="Style" value="Default Style" className="w-[146px]" />
      <Tool name="saveStyle" className="ml-1" /><Caret />
      <Sep className="mr-[3px]" />
      <Tool name="alignL" /><Tool name="alignR" /><Tool name="alignT" /><Tool name="alignB" /><Tool name="front" /><Tool name="back" />
      <Sep className="mx-0" />
      <Tool name="org" /><Caret />
      <Tool name="props" />
      <Sep className="mx-0" />
      <Tool name="remove" />
      <Sep />
      <input aria-label="Filter" className="h-[18px] w-[116px] border border-[#8a97ae] bg-white outline-none" />
      <Tool name="funnel" />
      <span className="flex-1" />
      <EndCap />
    </div>
  )
}

function DiagramView() {
  return (
    <section className="flex min-w-0 flex-1 flex-col border-l border-[#8e9aae]">
      <div className="flex h-[27px] shrink-0 items-center border-b border-[#9ca6b6] bg-[#bcc7d9] pr-2 pl-[3px] text-[11px] text-[#6f7885]">
        <Icon name="diagram" />
        <span className="ml-[23px] flex-1">Class Diagram: "Static Structure-1"</span>
        <div className="flex items-center gap-4 text-black">
          <svg viewBox="0 0 10 10" fill="none" className="mr-1 size-[10px]" aria-hidden="true"><path d="M1 5l4-4 4 4M1 9l4-4 4 4" stroke="#000" strokeWidth="1.500" /></svg>
          <Icon name="caret" className="size-[10px]" />
          <Icon name="close" className="size-[10px]" />
        </div>
      </div>
      <DiagramToolbar />
      <div className="flex min-h-0 flex-1">
        <EaCanvas />
        <div className="flex w-[18px] shrink-0 flex-col items-center bg-[#efefef] py-1">
          <Icon name="caret" className="size-[10px] rotate-180" />
          <div className="mt-[2px] flex h-[530px] w-[15px] items-center justify-center rounded-sm border border-[#999] bg-linear-to-r from-[#f4f4f4] to-[#cfcfcf]">
            <span className="h-[7px] w-2 bg-[repeating-linear-gradient(#666_0_1px,transparent_1px_3px)]" />
          </div>
          <div className="flex-1" />
          <Icon name="caret" className="size-[10px]" />
        </div>
      </div>
      <div className="flex h-[21px] shrink-0 items-center border-b border-[#aab] text-[11px]">
        <svg viewBox="0 0 8 8" className="ml-1 size-2" aria-hidden="true"><path d="M6 0v8L1 4z" fill="none" stroke="#fff" /></svg>
        <a href="#start" className="ml-1 flex h-full items-center gap-2 bg-[#bcc7d9] pr-4 pl-[27px] [clip-path:polygon(0_0,100%_0,100%_100%,20px_100%)]"><Icon name="logo" />Start Page</a>
        <a href="#diagram" className="-ml-[23px] flex h-full items-center gap-[6px] bg-white pr-[6px] pl-[27px] font-bold [clip-path:polygon(0_0,100%_0,100%_100%,20px_100%)]"><Icon name="diagram" />Static Structure-1</a>
        <span className="flex-1" />
        <svg viewBox="0 0 8 8" className="mr-2 size-2" aria-hidden="true"><path d="M2 0v8l5-4z" fill="none" stroke="#fff" /></svg>
      </div>
    </section>
  )
}

function StatusBar() {
  return (
    <footer className="flex h-[23px] shrink-0 items-center border-t border-[#6f7b90] bg-[#283652] pl-[3px] text-[11px] text-[#eef1f6]">
      <span className="w-[80px]">Class:Account</span>
      <span className="w-[34px]">Left:</span>
      <span className="w-[57px]">29 x Top:</span>
      <span className="w-[75px]">352 - Width:</span>
      <span className="w-[79px]">180 x Height:</span>
      <span className="flex-1">187</span>
      <div className="flex items-center gap-2">
        <button aria-label="Zoom out" className="flex size-[15px] items-center justify-center rounded-full bg-[#c4cfe0] leading-none text-[#fff]">−</button>
        <input type="range" aria-label="Zoom" defaultValue="60" className="h-4 w-[85px] appearance-none bg-transparent [&::-webkit-slider-runnable-track]:h-[3px] [&::-webkit-slider-runnable-track]:bg-[#e6e9ef] [&::-webkit-slider-thumb]:-mt-[6px] [&::-webkit-slider-thumb]:h-[14px] [&::-webkit-slider-thumb]:w-[9px] [&::-webkit-slider-thumb]:appearance-none [&::-webkit-slider-thumb]:rounded-b-full [&::-webkit-slider-thumb]:bg-[#d5d5d5]" />
        <button aria-label="Zoom in" className="flex size-[15px] items-center justify-center rounded-full bg-[#c4cfe0] leading-none text-[#fff]">+</button>
      </div>
      <div className="ml-1 flex h-[15px] w-[186px] items-center justify-between rounded-sm border border-[#93a5c4] pr-[10px] pl-[7px] text-[#747d8c]">
        <span>CAP</span>
        <span className="text-white">NUM</span>
        <span>SCRL</span>
        <span>CLOUD</span>
      </div>
    </footer>
  )
}

const menus = ["File", "Edit", "View", "Project", "Diagram", "Element", "Tools", "Analyzer", "Extensions", "Settings", "Window", "Help"]

function ArchitectWindow() {
  return (
    <section className="absolute top-[356px] right-0 bottom-0 left-[705px] flex flex-col border-b-2 border-[#8c95a6] bg-[#283652]">
      <header className="flex h-[22px] shrink-0 items-start border-b-2 border-[#14294a] bg-linear-to-r from-[#86a0c4] from-[8%] via-[#1d5088] via-[17%] to-[#1a3c6c]">
        <h1 className="flex h-5 flex-1 items-center gap-[6px] text-[12px]"><Icon name="logo" />Imported Visio Sample - Enterprise Architect</h1>
        <div className="mr-[3px] flex h-[14px] overflow-hidden rounded-b border border-[#aab6c8] text-white">
          <button aria-label="Minimize window" className="flex w-7 items-end justify-center border-r border-[#aab6c8] bg-[#5f7ba2] pb-[3px]"><span className="h-[3px] w-3 bg-white" /></button>
          <button aria-label="Restore window" className="flex w-7 items-center justify-center border-r border-[#aab6c8] bg-[#5f7ba2]"><span className="size-2 border-2 border-white" /></button>
          <button aria-label="Close window" className="flex w-[47px] items-center justify-center bg-linear-to-b from-[#d88a80] to-[#b83a26]"><Icon name="close" className="size-[9px]" /></button>
        </div>
      </header>
      <nav className="flex h-6 shrink-0 items-center gap-[15px] bg-linear-to-b from-[#cdd5e4] to-[#a9b5c9] text-[11px]">
        <span className="-mr-[5px]"><Grip /></span>
        {menus.map((m) => (
          <button key={m}>{m}</button>
        ))}
      </nav>
      <div className="flex h-7 shrink-0 items-center gap-[2px] bg-[#9aa8c0]">
        <div className="flex h-full items-center rounded-r bg-[#bcc7d9]">
          <Grip />
          <Tool name="newDoc" className="mr-px" /><Tool name="open" /><Caret /><Tool name="saveDim" />
          <Sep />
          <Tool name="cut" /><Tool name="copy" /><Tool name="paste" />
          <Tool name="undo" className="text-[#7f91bd]" /><Tool name="redo" className="text-[#7f91bd]" />
          <Sep />
          <Tool name="preview" /><Tool name="page" /><Tool name="print" />
          <Sep />
          <Tool name="findFolder" /><Tool name="findDoc" />
          <Sep />
          <Combo label="Perspective" value="<default>" className="mx-[2px] w-[146px]" />
          <Tool name="helpRing" className="mr-1 ml-2" />
          <EndCap />
        </div>
        <div className="flex h-full items-center rounded-r bg-[#bcc7d9]">
          <Grip />
          <Tool name="layoutSave" /><Tool name="props" />
          <Combo label="Layout" value="Basic - Normal" className="mx-[2px] mr-1 w-[146px]" />
          <EndCap />
        </div>
        <div className="flex h-full items-center rounded-r bg-[#bcc7d9]">
          <Grip />
          <Tool name="bug" /><Caret />
          <Sep />
          <Tool name="gear" /><Tool name="play" /><Tool name="pause" /><Tool name="step1" /><Tool name="step2" /><Tool name="step3" /><Tool name="stop" />
          <EndCap />
        </div>
      </div>
      <div className="flex min-h-0 flex-1 bg-[radial-gradient(rgba(20,32,56,0.5)_1px,transparent_1px),linear-gradient(#2f4060,#46618f)] bg-[length:4px_4px,100%_100%]">
        <div className="flex w-6 shrink-0 flex-col gap-4 pt-1">
          <SideTab icon="people" label="Team Review" />
          <SideTab icon="mail" label="Model Mail" />
        </div>
        <Toolbox />
        <div className="w-1 shrink-0" />
        <DiagramView />
        <div className="w-[5px] shrink-0" />
        <aside className="flex w-[344px] shrink-0 flex-col">
          <ProjectBrowser />
          <Properties />
        </aside>
        <div className="flex w-[23px] shrink-0 flex-col items-end gap-4 pt-1">
          <SideTab icon="findFolder" label="Model Views" />
          <SideTab icon="pageLens" label="Element Browser" />
        </div>
      </div>
      <StatusBar />
    </section>
  )
}

export default function App() {
  return (
    <main className="relative min-h-screen overflow-hidden bg-white font-['Open_Sans','Noto_Sans',sans-serif] text-black">
      <VisioWindow />
      <ArchitectWindow />
      {/* hand-drawn arrows between the two windows */}
      <svg className="pointer-events-none absolute inset-0 h-full w-full" fill="none" stroke="#3f48cc" strokeWidth="8" strokeLinecap="round" strokeLinejoin="round" aria-hidden="true">
        <path d="M1168 86C1330 108 1560 145 1680 180S1850 260 1921 347M1858 321l63 26-8-64" />
        <path d="M198 774C240 860 320 985 400 1085S560 1205 701 1217M616 1173l85 44-99 1" />
      </svg>
      <p className="pointer-events-none absolute right-1 bottom-[13px] font-['Liberation_Sans',sans-serif] text-[47px] leading-[60px] text-[#e2e2e2]/80 [text-shadow:2px_2px_1px_rgba(90,90,90,0.5)]">
        CSDN @GalaxySinCos
      </p>
    </main>
  )
}
